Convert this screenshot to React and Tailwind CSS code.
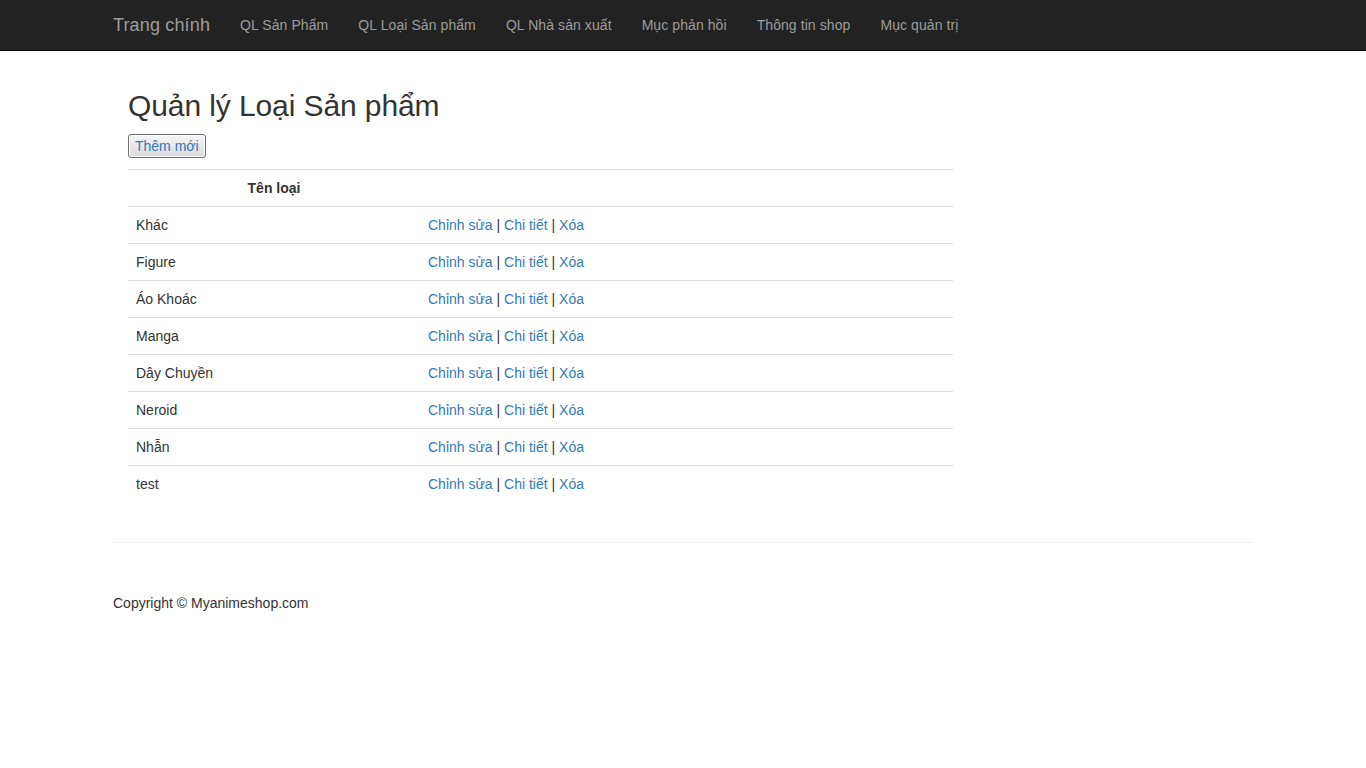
const navLinks = [
  "QL Sản Phẩm",
  "QL Loại Sản phẩm",
  "QL Nhà sản xuất",
  "Mục phản hồi",
  "Thông tin shop",
  "Mục quản trị",
];

const categories = [
  "Khác",
  "Figure",
  "Áo Khoác",
  "Manga",
  "Dây Chuyền",
  "Neroid",
  "Nhẫn",
  "test",
];

function Navbar() {
  return (
    <nav className="h-[51px] bg-[#222222] border-b border-[#080808]">
      <div className="w-[1170px] mx-auto flex">
        <a href="#" className="px-[15px] py-[15px] text-[18px] leading-5 tracking-[0.15px] text-[#9d9d9d]">
          Trang chính
        </a>
        {navLinks.map((label) => (
          <a
            key={label}
            href="#"
            className="px-[15px] py-[15px] text-[14px] leading-5 tracking-[0.08px] text-[#9d9d9d]"
          >
            {label}
          </a>
        ))}
      </div>
    </nav>
  );
}

function CategoryTable() {
  return (
    <table className="w-[825px] mt-[11px] mb-5 border-collapse text-[14px] leading-5">
      <tbody>
        <tr className="border-t border-[#dddddd]">
          <th className="w-[292px] p-2 font-bold text-center">Tên loại</th>
          <th className="p-2"></th>
        </tr>
        {categories.map((name) => (
          <tr key={name} className="border-t border-[#dddddd]">
            <td className="p-2 text-left">{name}</td>
            <td className="p-2 text-left">
              <a href="#" className="text-[#337ab7]">Chỉnh sửa</a>
              {" | "}
              <a href="#" className="text-[#337ab7]">Chi tiết</a>
              {" | "}
              <a href="#" className="text-[#337ab7]">Xóa</a>
            </td>
          </tr>
        ))}
      </tbody>
    </table>
  );
}

export default function App() {
  return (
    <div className="min-h-[768px] bg-white text-[#333333] font-['Liberation_Sans',Arial,sans-serif]">
      <Navbar />
      <div className="w-[1170px] mx-auto px-[15px]">
        <div className="px-[15px]">
          <h2 className="mt-[38px] mb-[12px] text-[30px] leading-[33px] font-medium tracking-[-0.1px]">
            Quản lý Loại Sản phẩm
          </h2>
          <button
            type="button"
            className="h-[24px] px-[6px] rounded-[3px] border border-[#707070] bg-linear-to-b from-[#f6f6f6] to-[#dadada] shadow-[inset_0_0_0_1px_#fcfcfc] text-[14px] leading-5 text-[#337ab7]"
          >
            Thêm mới
          </button>
          <CategoryTable />
        </div>
        <hr className="mt-[40px] border-0 border-t border-[#eeeeee]" />
        <footer>
          <p className="mt-[50px] text-[14px] leading-5">
            Copyright © Myanimeshop.com
          </p>
        </footer>
      </div>
    </div>
  );
}
